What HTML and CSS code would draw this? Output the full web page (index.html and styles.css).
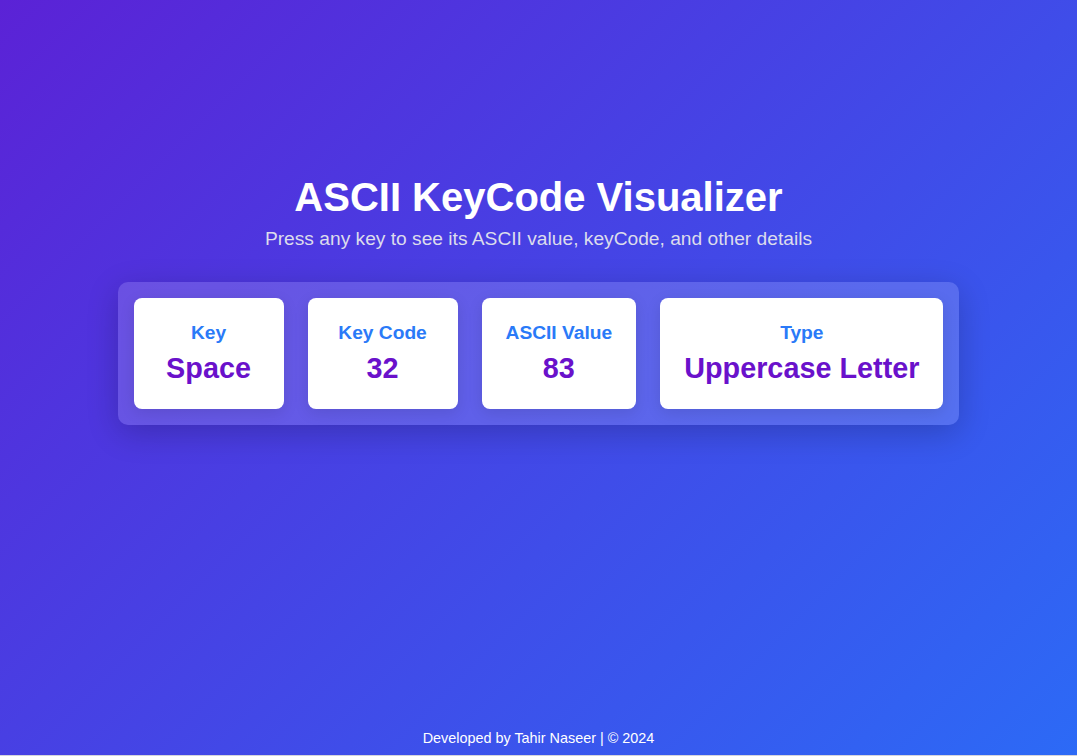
FILE: index.html
```html
<!DOCTYPE html>
<html lang="en">
<head>
<meta charset="UTF-8">
<title>ASCII KeyCode Visualizer</title>
<link rel="stylesheet" href="styles.css">
</head>
<body>
<div class="page">
  <main class="main">
    <h1 class="title">ASCII KeyCode Visualizer</h1>
    <p class="subtitle">Press any key to see its ASCII value, keyCode, and other details</p>
    <div class="panel">
      <div class="card">
        <div class="label">Key</div>
        <div class="value">Space</div>
      </div>
      <div class="card">
        <div class="label">Key Code</div>
        <div class="value">32</div>
      </div>
      <div class="card">
        <div class="label">ASCII Value</div>
        <div class="value">83</div>
      </div>
      <div class="card">
        <div class="label">Type</div>
        <div class="value">Uppercase Letter</div>
      </div>
    </div>
  </main>
  <footer class="footer">Developed by Tahir Naseer | © 2024</footer>
</div>
</body>
</html>
```

FILE: styles.css
```css
html {
  background: #d4d4dc;
}
body {
  margin: 0;
  font-family: "Liberation Sans", Arial, sans-serif;
  color: #fff;
}
.page {
  min-height: 755px;
  display: flex;
  flex-direction: column;
  background: linear-gradient(135deg, #5b22d6 0%, #2c6af6 100%);
}
.main {
  flex: 1;
  display: flex;
  flex-direction: column;
  align-items: center;
  padding-top: 174px;
}
.title {
  margin: 0 0 8px;
  font-size: 40px;
  font-weight: bold;
  line-height: 46px;
}
.subtitle {
  margin: 0 0 33px;
  font-size: 19.2px;
  line-height: 21px;
  color: #dcdcec;
}
.panel {
  display: flex;
  gap: 24px;
  padding: 16px;
  border-radius: 10px;
  background: rgba(255, 255, 255, 0.15);
  box-shadow: 0 8px 32px rgba(0, 0, 0, 0.2);
}
.card {
  box-sizing: border-box;
  min-width: 150px;
  padding: 24px 24px;
  background: #fff;
  border-radius: 8px;
  text-align: center;
  box-shadow: 0 4px 15px rgba(0, 0, 0, 0.1);
}
.label {
  font-size: 19.2px;
  line-height: 21px;
  font-weight: bold;
  color: #2a7af8;
  margin-bottom: 9px;
}
.value {
  font-size: 28.8px;
  line-height: 32px;
  font-weight: bold;
  color: #6a11cb;
  padding-bottom: 1px;
}
.footer {
  text-align: center;
  font-size: 14.4px;
  line-height: 16px;
  padding: 0 0 9px;
}
```
